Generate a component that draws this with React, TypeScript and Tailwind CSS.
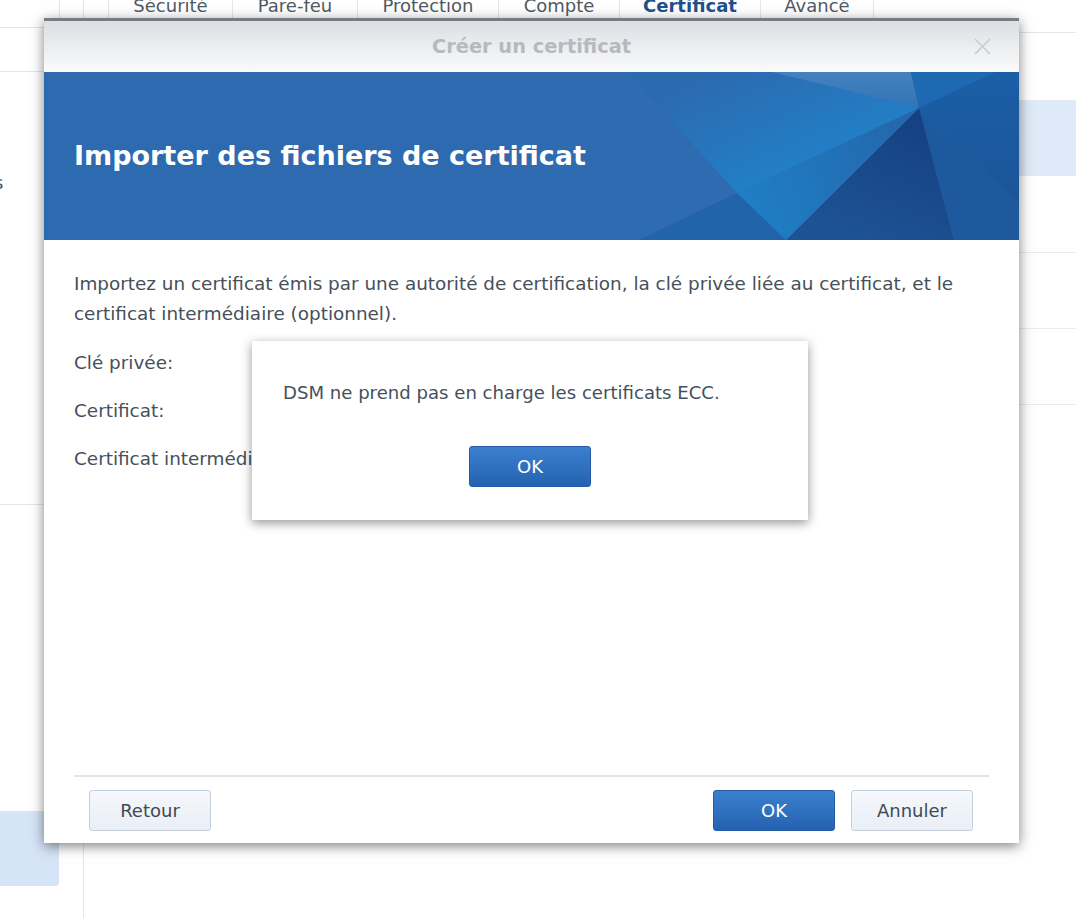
import React from 'react'

const tabs = [
  { label: 'Sécurité', w: 'w-[124px]' },
  { label: 'Pare-feu', w: 'w-[125px]' },
  { label: 'Protection', w: 'w-[141px]' },
  { label: 'Compte', w: 'w-[121px]' },
  { label: 'Certificat', w: 'w-[141px]', active: true },
  { label: 'Avancé', w: 'w-[114px]' },
]

function BannerPattern() {
  return (
    <svg className="absolute inset-0" width="975" height="168" viewBox="0 0 975 168">
      <defs>
        <linearGradient id="gA" gradientUnits="userSpaceOnUse" x1="650" y1="10" x2="700" y2="125">
          <stop offset="0" stopColor="#2c6ab0" />
          <stop offset="1" stopColor="#2180c7" />
        </linearGradient>
        <linearGradient id="gTop" x1="0" y1="0" x2="0" y2="1">
          <stop offset="0" stopColor="#4582bf" />
          <stop offset="1" stopColor="#3274b7" />
        </linearGradient>
        <linearGradient id="gDark" gradientUnits="userSpaceOnUse" x1="875" y1="36" x2="820" y2="168">
          <stop offset="0" stopColor="#153f80" />
          <stop offset="1" stopColor="#1d5294" />
        </linearGradient>
        <linearGradient id="gMid" gradientUnits="userSpaceOnUse" x1="700" y1="125" x2="860" y2="50">
          <stop offset="0" stopColor="#1f7ec5" />
          <stop offset="1" stopColor="#2467ac" />
        </linearGradient>
        <linearGradient id="gRight" x1="0" y1="0" x2="0" y2="1">
          <stop offset="0" stopColor="#1a5fa6" />
          <stop offset="1" stopColor="#1c5498" />
        </linearGradient>
      </defs>
      <polygon points="455,0 585,0 602,21 693,121 595,168 483,168" fill="#2e6bb1" />
      <polygon points="585,0 728,0 875,36 693,121 602,21" fill="url(#gA)" />
      <polygon points="728,0 867,0 875,36" fill="url(#gTop)" />
      <polygon points="867,0 951,0 875,36" fill="#1d69b2" />
      <polygon points="951,0 975,0 975,133 875,36" fill="url(#gRight)" />
      <polygon points="875,36 975,133 975,168 910,168" fill="#1f599d" />
      <polygon points="875,36 910,168 742,168" fill="url(#gDark)" />
      <polygon points="875,36 742,168 693,121" fill="url(#gMid)" />
      <polygon points="693,121 742,168 595,168" fill="#2164a9" />
    </svg>
  )
}

function MessageBox() {
  return (
    <div className="absolute left-[208px] top-[323px] w-[556px] h-[179px] bg-white shadow-[0_3px_10px_rgba(0,0,0,0.42)] flex flex-col pt-[38px]">
      <p className="pl-[31px] text-[18.1px] leading-[28px] text-[#46505b]">
        DSM ne prend pas en charge les certificats ECC.
      </p>
      <div className="flex justify-center mt-[39px]">
        <button className="w-[122px] h-[41px] rounded-[3px] border border-[#2459a3] bg-gradient-to-b from-[#3b80cf] to-[#2562b1] text-white text-[18px]">
          OK
        </button>
      </div>
    </div>
  )
}

function CertificateDialog() {
  return (
    <div className="absolute left-[44px] top-[18px] w-[975px] h-[825px] bg-white flex flex-col shadow-[0_3px_12px_rgba(0,0,0,0.5)]">
      {/* Header */}
      <div className="h-[54px] shrink-0 border-t-[3px] border-[#767b84] bg-gradient-to-b from-[#dcdfe3] to-[#fafbfc] grid grid-cols-[1fr_auto_1fr] items-center">
        <div />
        <h2 className="text-[19.4px] font-bold text-[#b6babf]">Créer un certificat</h2>
        <div className="justify-self-end mr-[28px] flex">
          <svg width="17" height="17" viewBox="0 0 17 17">
            <path d="M1 1 L16 16 M16 1 L1 16" stroke="#c8cbcf" strokeWidth="1.6" fill="none" />
          </svg>
        </div>
      </div>

      {/* Banner */}
      <div className="relative h-[168px] shrink-0 bg-[#2d6ab0] overflow-hidden flex items-center">
        <BannerPattern />
        <h1 className="relative pl-[30px] text-[27px] font-bold text-white">
          Importer des fichiers de certificat
        </h1>
      </div>

      {/* Body */}
      <div className="flex-1 px-[30px] pt-[29px] text-[18.4px] leading-[30px] text-[#46505b]">
        <p>
          Importez un certificat émis par une autorité de certification, la clé privée liée au certificat, et le
          certificat intermédiaire (optionnel).
        </p>
        <div className="mt-[19px] flex flex-col gap-[18px]">
          <div>Clé privée:</div>
          <div>Certificat:</div>
          <div>Certificat intermédiaire:</div>
        </div>
      </div>

      {/* Footer */}
      <div className="mx-[30px] border-t-2 border-[#e2e3e5] pt-[13px] pb-[12px] px-[15px] flex justify-between">
        <button className="w-[122px] h-[41px] rounded-[3px] border border-[#c4cfdc] bg-gradient-to-b from-[#f5f8fc] to-[#e9eff6] text-[18px] text-[#3f4a56]">
          Retour
        </button>
        <div className="flex gap-[16px] mr-[1px]">
          <button className="w-[122px] h-[41px] rounded-[3px] border border-[#2459a3] bg-gradient-to-b from-[#3b80cf] to-[#2562b1] text-white text-[18px]">
            OK
          </button>
          <button className="w-[122px] h-[41px] rounded-[3px] border border-[#c4cfdc] bg-gradient-to-b from-[#f5f8fc] to-[#e9eff6] text-[18px] text-[#3f4a56]">
            Annuler
          </button>
        </div>
      </div>

      <MessageBox />
    </div>
  )
}

export default function App() {
  return (
    <div className="relative w-[1076px] h-[918px] overflow-hidden bg-white font-['DejaVu_Sans',sans-serif]">
      <div className="flex h-full">
        {/* Sidebar */}
        <aside className="w-[84px] shrink-0 border-r border-[#e4e6e9] flex flex-col">
          <div className="h-[28px] border-b border-[#e4e6e9] flex">
            <div className="w-[60px] border-r border-[#e4e6e9]" />
          </div>
          <div className="h-[44px] border-b border-[#e4e6e9]" />
          <div className="mt-[100px] text-[18px] leading-[22px] text-[#4a5561]">
            <span className="-ml-[6px]">s</span>
          </div>
          <div className="mt-[310px] border-b border-[#e4e6e9]" />
          <div className="mt-[306px] w-[59px] h-[75px] rounded-r-[4px] bg-[#d6e4f7]" />
        </aside>

        {/* Main */}
        <main className="flex-1 flex flex-col">
          <div className="h-[33px] shrink-0 border-b border-[#e4e6e9] pl-[24px] flex">
            {tabs.map((t) => (
              <div
                key={t.label}
                className={`${t.w} border-l border-[#e4e6e9] last:border-r flex justify-center items-start`}
              >
                <span
                  className={`-mt-[5px] leading-[22px] text-[18px] ${
                    t.active ? 'font-bold text-[#1f4f8d]' : 'text-[#4f5964]'
                  }`}
                >
                  {t.label}
                </span>
              </div>
            ))}
          </div>
          <div className="mt-[67px] flex flex-col">
            <div className="h-[76px] bg-[#dfeaf8] border-t border-[#e8eaed]" />
            <div className="h-[77px] border-b border-[#e8eaed]" />
            <div className="h-[76px] border-b border-[#e8eaed]" />
            <div className="h-[76px] border-b border-[#e8eaed]" />
          </div>
        </main>
      </div>

      <CertificateDialog />
    </div>
  )
}
